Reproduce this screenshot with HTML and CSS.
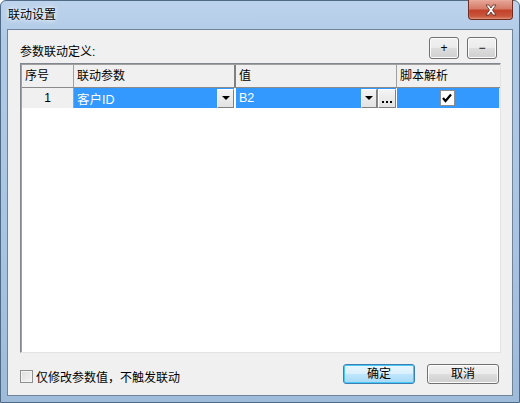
FILE: index.html
```html
<!DOCTYPE html>
<html lang="zh-CN">
<head>
    <meta charset="UTF-8">
    <title>联动设置</title>
    <link rel="stylesheet" href="styles.css">
</head>
<body>
    <div class="window">
        <!-- Barra de título -->
        <div class="titlebar">
            <span class="title">联动设置</span>
            <div class="close-btn">
                <svg width="16" height="12" viewBox="0 0 16 12">
                    <path d="M3 1 L6 1 L8 4 L10 1 L13 1 L9.5 6 L13 11 L10 11 L8 8 L6 11 L3 11 L6.5 6 Z" fill="#fff" stroke="#5a2a22" stroke-width="0.8"/>
                </svg>
            </div>
        </div>

        <div class="client">
            <div class="top-row">
                <span class="group-label">参数联动定义:</span>
                <div class="small-buttons">
                    <button class="btn small">+</button>
                    <button class="btn small">−</button>
                </div>
            </div>

            <div class="grid">
                <div class="grid-header">
                    <div class="hcell col-no">序号</div>
                    <div class="hcell col-param">联动参数</div>
                    <div class="hcell col-value">值</div>
                    <div class="hcell col-script">脚本解析</div>
                </div>
                <div class="grid-row">
                    <div class="cell col-no num">1</div>
                    <div class="cell col-param selected">
                        <span class="cell-text">客户ID</span>
                        <span class="drop-btn"><i class="tri"></i></span>
                    </div>
                    <div class="cell col-value selected">
                        <span class="cell-text">B2</span>
                        <span class="drop-btn"><i class="tri"></i></span>
                        <span class="dots-btn"><i class="dot"></i><i class="dot"></i><i class="dot"></i></span>
                    </div>
                    <div class="cell col-script selected center">
                        <span class="check-box">
                            <svg width="12" height="12" viewBox="0 0 12 12">
                                <path d="M2 6 L4.5 9 L10 2.5" fill="none" stroke="#000" stroke-width="2.2"/>
                            </svg>
                        </span>
                    </div>
                </div>
            </div>

            <div class="bottom-row">
                <label class="option">
                    <span class="option-box"></span>
                    <span>仅修改参数值，不触发联动</span>
                </label>
                <div class="dialog-buttons">
                    <button class="btn wide default">确定</button>
                    <button class="btn wide">取消</button>
                </div>
            </div>
        </div>
    </div>
</body>
</html>
```
FILE: styles.css
```css
body {
    margin: 0;
    font-family: "Liberation Sans", "Noto Sans CJK SC", sans-serif;
    font-size: 12px;
    color: #000;
}

.window {
    width: 520px;
    height: 403px;
    box-sizing: border-box;
    background: linear-gradient(180deg, #bdd3ec 0%, #b0cae6 10%, #a9c4e2 60%, #9ebbd9 100%);
    border: 1px solid #4f6a86;
    border-radius: 6px 6px 0 0;
    padding: 0 6px 6px 6px;
}

.titlebar {
    height: 28px;
    display: flex;
    align-items: flex-start;
    justify-content: space-between;
}

.title {
    margin-top: 4px;
    margin-left: 1px;
    font-size: 12px;
    color: #000;
    text-shadow: 0 0 6px #fff, 0 0 3px #fff;
}

.close-btn {
    width: 43px;
    height: 19px;
    margin-right: 0;
    margin-top: -1px;
    display: flex;
    align-items: center;
    justify-content: center;
    background: linear-gradient(180deg, #e6a799 0%, #d57c68 45%, #c2422a 55%, #c8553c 85%, #dc8a6e 100%);
    border: 1px solid #6e2c22;
    border-top: none;
    border-radius: 0 0 4px 4px;
    box-shadow: inset 0 0 1px #f8d0c4;
}

.client {
    height: 367px;
    box-sizing: border-box;
    background: #f0f0f0;
    border: 1px solid #6f8499;
    padding: 7px 11px 11px 12px;
    display: flex;
    flex-direction: column;
}

.top-row {
    height: 22px;
    display: flex;
    justify-content: space-between;
    align-items: flex-end;
    padding-right: 4px;
}

.group-label {
    line-height: 14px;
}

.small-buttons {
    display: flex;
    gap: 8px;
    align-self: stretch;
}

.btn {
    font-family: "Liberation Sans", "Noto Sans CJK SC", sans-serif;
    font-size: 12px;
    color: #000;
    padding: 0;
    border: 1px solid #707070;
    border-radius: 3px;
    background: linear-gradient(180deg, #f2f2f2 0%, #ebebeb 48%, #dddddd 52%, #cfcfcf 100%);
    box-shadow: inset 0 0 0 1px #fcfcfc;
}

.btn.small {
    width: 30px;
    height: 22px;
}

.btn.wide {
    width: 72px;
    height: 20px;
    line-height: 16px;
}

.btn.default {
    border-color: #3c7fb1;
    background: linear-gradient(180deg, #eaf6fd 0%, #d9f0fc 48%, #bee6fd 52%, #a7d9f5 100%);
    box-shadow: inset 0 0 0 1px #48c8f8;
}

.grid {
    margin-top: 4px;
    flex: 1;
    background: #fff;
    border: 1px solid #828790;
    border-bottom-color: #e3e3e3;
    border-right-color: #e3e3e3;
    box-shadow: inset 1px 1px 0 #a0a0a0;
}

.grid-header,
.grid-row {
    display: flex;
}

.grid-header {
    height: 22px;
    border-bottom: 1px solid #8a8a8a;
    margin-left: 1px;
    margin-top: 1px;
}

.hcell {
    box-sizing: border-box;
    background: #f0f0f0;
    border-right: 1px solid #a0a0a0;
    padding-left: 3px;
    line-height: 22px;
}

.col-no { width: 52px; }
.col-param { width: 162px; }
.col-value { width: 161px; }
.col-script { flex: 1; }

.hcell.col-param { border-right: 2px solid #808080; }
.hcell.col-script { border-right: none; }

.grid-row {
    height: 20px;
    margin-left: 1px;
}

.cell {
    box-sizing: border-box;
    display: flex;
    align-items: center;
    border-right: 1px solid #e6e6e6;
}

.cell.num {
    justify-content: center;
    background: #f0f0f0;
    border-right: 1px solid #a0a0a0;
}

.cell.selected {
    background: #3399ff;
    color: #fff;
}

.cell.col-param {
    border-right: 2px solid #fff;
}

.cell.col-value {
    border-right: 1px solid #fff;
}

.cell-text {
    flex: 1;
    padding-left: 3px;
    font-size: 12.5px;
}

.cell.center {
    justify-content: center;
    padding-right: 2px;
}

.drop-btn,
.dots-btn {
    box-sizing: border-box;
    height: 19px;
    background: linear-gradient(180deg, #f4f4f4 0%, #e2e2e2 100%);
    border: 1px solid #fff;
    border-right-color: #808080;
    border-bottom-color: #808080;
    display: flex;
    align-items: center;
    justify-content: center;
}

.drop-btn {
    width: 17px;
}

.dots-btn {
    width: 18px;
    margin-left: 1px;
    align-items: flex-end;
    gap: 2px;
    padding-bottom: 4px;
}

.dot {
    width: 2px;
    height: 2px;
    background: #000;
}

.tri {
    width: 0;
    height: 0;
    border-left: 4px solid transparent;
    border-right: 4px solid transparent;
    border-top: 4px solid #000;
}

.col-value .drop-btn {
    width: 16px;
    margin-left: 1px;
}

.check-box {
    box-sizing: border-box;
    width: 15px;
    height: 16px;
    background: #fff;
    border: 1px solid #8f8f8f;
    display: flex;
    align-items: center;
    justify-content: center;
}

.bottom-row {
    margin-top: 11px;
    height: 20px;
    display: flex;
    justify-content: space-between;
    align-items: center;
    padding-right: 2px;
}

.option {
    display: flex;
    align-items: center;
    gap: 3px;
    margin-top: 5px;
}

.option-box {
    box-sizing: border-box;
    width: 13px;
    height: 13px;
    border: 1px solid #8e8f8f;
    background: linear-gradient(135deg, #dcdcdc 0%, #f6f6f6 100%);
    box-shadow: inset 0 0 0 1px #f4f4f4;
}

.dialog-buttons {
    display: flex;
    gap: 12px;
}
```
